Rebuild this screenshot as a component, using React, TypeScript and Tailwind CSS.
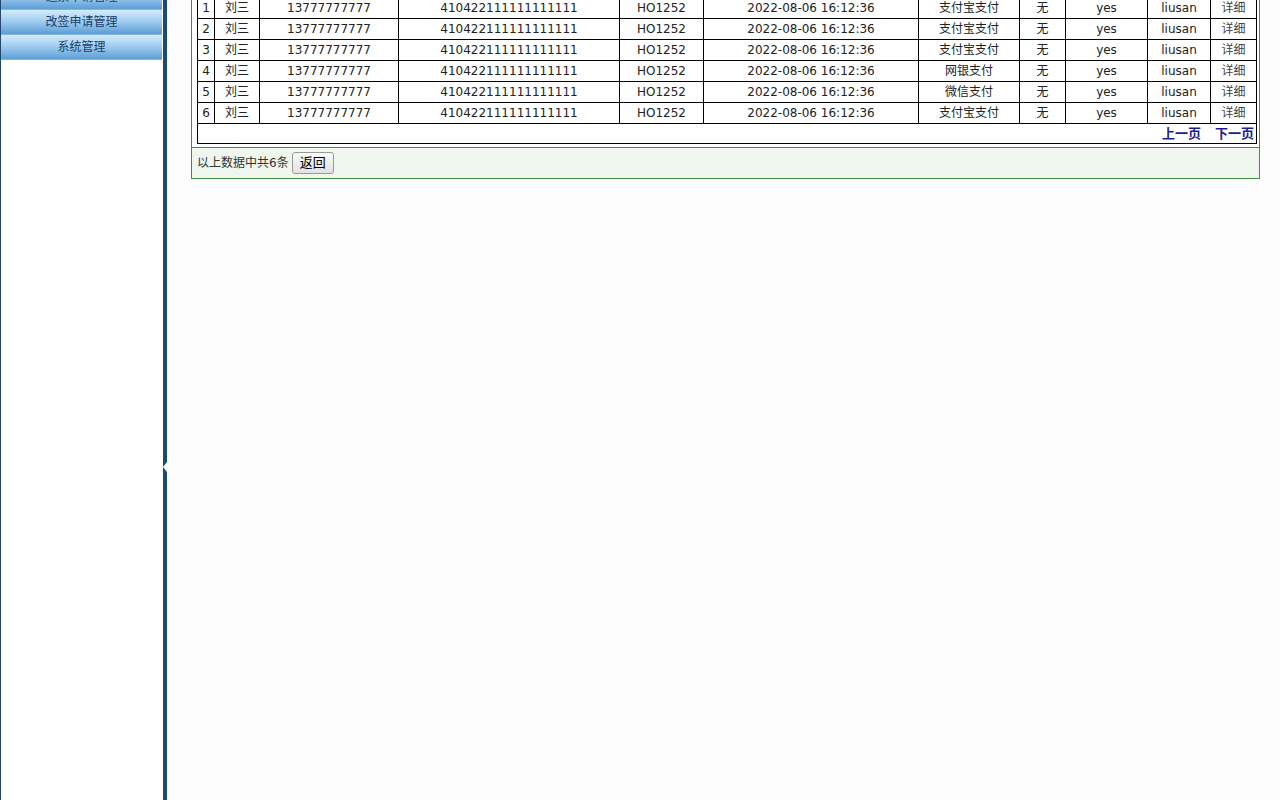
import React from 'react';

const rows = [
  { id: 1, pay: '支付宝支付' },
  { id: 2, pay: '支付宝支付' },
  { id: 3, pay: '支付宝支付' },
  { id: 4, pay: '网银支付' },
  { id: 5, pay: '微信支付' },
  { id: 6, pay: '支付宝支付' },
];

const colWidths = [17, 45, 139, 221, 84, 215, 101, 46, 82, 63, 46];

const menu = ['退票申请管理', '改签申请管理', '系统管理'];

function Sidebar() {
  return (
    <div className="relative w-[167px] shrink-0 h-full border-l border-l-[#24476b] border-r-4 border-r-[#1b4b74] bg-white">
      <div className="-mt-[15px] flex flex-col w-[161px]">
        {menu.map(item => (
          <div
            key={item}
            className="h-[25px] flex items-center justify-center text-[12px] text-[#173f6a] bg-gradient-to-b from-[#d4ecfb] via-[#9ccaef] to-[#5b9ed6] border-b border-[#7fb6e2]"
          >
            {item}
          </div>
        ))}
      </div>
      <div className="absolute -right-[4px] top-[462px] w-0 h-0 border-y-[5px] border-y-transparent border-r-[4px] border-r-white" />
    </div>
  );
}

function OrderTable() {
  return (
    <table className="table-fixed border-collapse w-[1059px] text-[12px] text-[#222]">
      <colgroup>
        {colWidths.map((w, i) => (
          <col key={i} style={{ width: w }} />
        ))}
      </colgroup>
      <tbody>
        {rows.map(r => (
          <tr key={r.id} className="h-[21px]">
            <td className="border border-black text-center p-0">{r.id}</td>
            <td className="border border-black text-center p-0">刘三</td>
            <td className="border border-black text-center p-0">13777777777</td>
            <td className="border border-black text-center p-0">410422111111111111</td>
            <td className="border border-black text-center p-0">HO1252</td>
            <td className="border border-black text-center p-0">2022-08-06 16:12:36</td>
            <td className="border border-black text-center p-0">{r.pay}</td>
            <td className="border border-black text-center p-0">无</td>
            <td className="border border-black text-center p-0">yes</td>
            <td className="border border-black text-center p-0">liusan</td>
            <td className="border border-black text-center p-0 text-[#444]">详细</td>
          </tr>
        ))}
        <tr className="h-[20px]">
          <td colSpan={11} className="border border-black p-0 pr-[2px] text-right text-[13px] leading-[18px]">
            <span className="font-bold text-[#1d1d8f] mr-[14px]">上一页</span>
            <span className="font-bold text-[#1d1d8f]">下一页</span>
          </td>
        </tr>
      </tbody>
    </table>
  );
}

export default function App() {
  return (
    <div
      className="flex w-[1280px] h-[800px] overflow-hidden bg-[#fdfdfd]"
      style={{ fontFamily: '"DejaVu Sans", "Noto Sans CJK SC", sans-serif' }}
    >
      <Sidebar />
      <div className="flex-1 pl-[24px] pr-[20px]">
        <div className="-mt-[9px] border border-[#3f9140] bg-white">
          <div className="pt-[5px] pl-[5px] pb-[3px]">
            <OrderTable />
          </div>
          <div className="h-[31px] border-t border-[#3f9140] bg-[#eef6ee] flex items-center pl-[5px] gap-[3px]">
            <span className="text-[12px] text-[#333]">以上数据中共6条</span>
            <button className="h-[22px] px-[7px] text-[13px] text-black border border-[#9a9a9a] rounded-[3px] bg-gradient-to-b from-[#fafafa] to-[#e2e2e2]">
              返回
            </button>
          </div>
        </div>
      </div>
    </div>
  );
}
